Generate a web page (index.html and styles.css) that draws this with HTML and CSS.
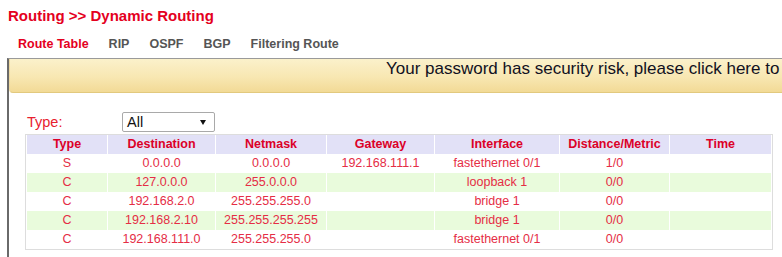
FILE: index.html
```html
<!DOCTYPE html>
<html>
<head>
<meta charset="utf-8">
<link rel="stylesheet" href="styles.css">
</head>
<body>
<div class="page-title">Routing &gt;&gt; Dynamic Routing</div>
<nav class="tabs">
  <span class="tab active">Route Table</span>
  <span class="tab">RIP</span>
  <span class="tab">OSPF</span>
  <span class="tab">BGP</span>
  <span class="tab">Filtering Route</span>
</nav>
<div class="panel">
  <div class="banner"><span class="banner-text">Your password has security risk, please click here to</span></div>
  <div class="content">
    <div class="filter-row">
      <span class="filter-label">Type:</span>
      <div class="select"><span>All</span><span class="arrow"></span></div>
    </div>
    <table class="routes">
      <colgroup>
        <col class="c-type"><col class="c-dest"><col class="c-mask"><col class="c-gw"><col class="c-if"><col class="c-dm"><col class="c-time">
      </colgroup>
      <thead>
        <tr><th>Type</th><th>Destination</th><th>Netmask</th><th>Gateway</th><th>Interface</th><th>Distance/Metric</th><th>Time</th></tr>
      </thead>
      <tbody>
        <tr><td>S</td><td>0.0.0.0</td><td>0.0.0.0</td><td>192.168.111.1</td><td>fastethernet 0/1</td><td>1/0</td><td></td></tr>
        <tr class="alt"><td>C</td><td>127.0.0.0</td><td>255.0.0.0</td><td></td><td>loopback 1</td><td>0/0</td><td></td></tr>
        <tr><td>C</td><td>192.168.2.0</td><td>255.255.255.0</td><td></td><td>bridge 1</td><td>0/0</td><td></td></tr>
        <tr class="alt"><td>C</td><td>192.168.2.10</td><td>255.255.255.255</td><td></td><td>bridge 1</td><td>0/0</td><td></td></tr>
        <tr><td>C</td><td>192.168.111.0</td><td>255.255.255.0</td><td></td><td>fastethernet 0/1</td><td>0/0</td><td></td></tr>
      </tbody>
    </table>
  </div>
</div>
</body>
</html>
```
FILE: styles.css
```css
html, body {
  margin: 0;
  padding: 0;
  background: #ffffff;
  overflow: hidden;
}
body {
  font-family: "Liberation Sans", Arial, sans-serif;
  width: 782px;
  height: 257px;
}
.page-title {
  margin: 7px 0 0 8px;
  font-size: 15px;
  line-height: 18px;
  font-weight: bold;
  color: #e4001e;
}
.tabs {
  display: flex;
  margin: 12px 0 0 8px;
  font-size: 12.5px;
  line-height: 15px;
  font-weight: bold;
}
.tab {
  padding: 0 10px;
  color: #555555;
}
.tab.active {
  color: #e4001e;
}
.panel {
  margin: 6px 0 0 7px;
  border-top: 1px solid #9a9a9a;
  border-left: 2px solid #6a6a6a;
  height: 200px;
}
.banner {
  height: 33px;
  border-bottom: 1px solid #e2c97e;
  border-left: 1px solid #eed9a0;
  border-bottom-left-radius: 4px;
  background: linear-gradient(to bottom, #fbf1cb 0%, #f8e7b2 55%, #f2da96 100%);
  padding-left: 376px;
  font-size: 17px;
  line-height: 20px;
  color: #111122;
  white-space: nowrap;
}
.content {
  padding: 19px 0 0 16px;
}
.filter-row {
  display: flex;
  align-items: center;
  height: 20px;
}
.filter-label {
  width: 95px;
  padding-left: 2px;
  font-size: 14.5px;
  line-height: 20px;
  color: #e8202e;
}
.select {
  box-sizing: border-box;
  width: 93px;
  height: 20px;
  border: 1px solid #a9a9a9;
  border-radius: 2px;
  display: flex;
  align-items: center;
  justify-content: space-between;
  padding: 0 8px 0 4px;
  font-size: 14.5px;
  color: #111111;
}
.arrow {
  width: 0;
  height: 0;
  border-left: 3px solid transparent;
  border-right: 3px solid transparent;
  border-top: 5px solid #111111;
}
.routes {
  margin-top: 2px;
  width: 746px;
  table-layout: fixed;
  border-collapse: separate;
  border-spacing: 1px 0;
  border: 1px solid #dddddd;
  font-size: 12.5px;
}
.c-type { width: 80px; }
.c-dest { width: 107px; }
.c-mask { width: 110px; }
.c-gw { width: 107px; }
.c-if { width: 124px; }
.c-dm { width: 109px; }
.c-time { width: 101px; }
.routes th, .routes td {
  padding: 0;
  height: 19px;
  line-height: 19px;
  text-align: center;
  white-space: nowrap;
}
.routes th {
  background: #e2e1f7;
  color: #dc0028;
  font-weight: bold;
}
.routes td {
  color: #e52d45;
}
.routes tr.alt td {
  background: #e9fbdc;
}
```
